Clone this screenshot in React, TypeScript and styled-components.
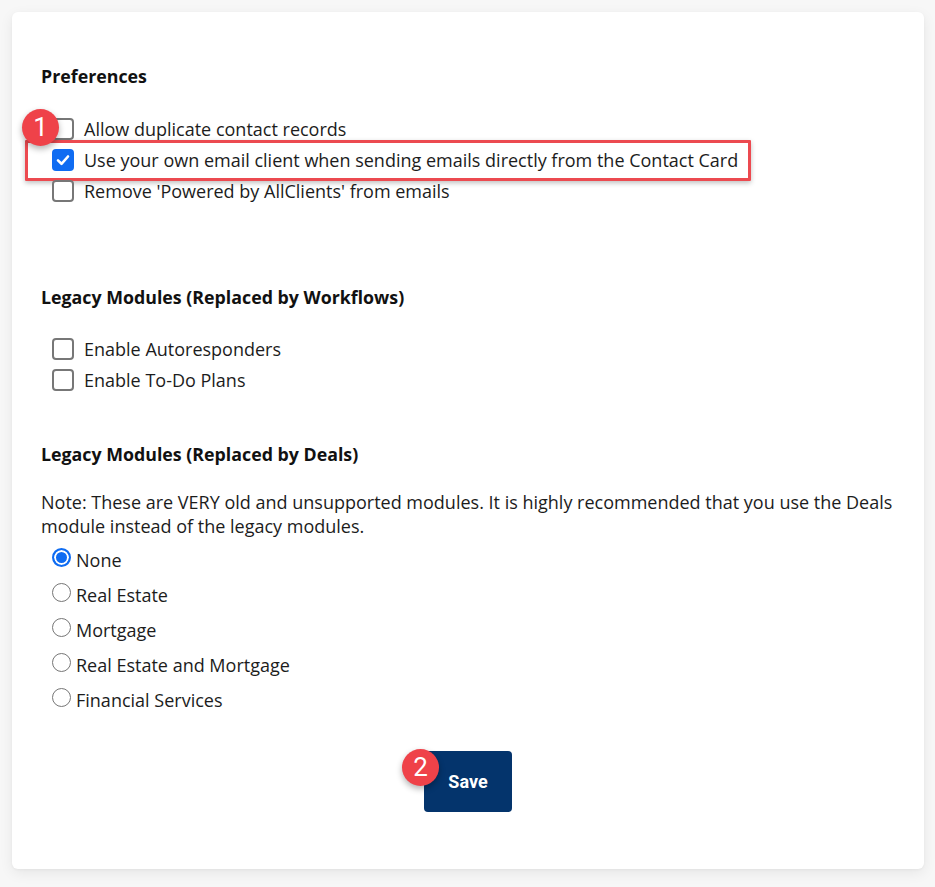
import React from 'react';
import styled, { createGlobalStyle } from 'styled-components';

const GlobalStyle = createGlobalStyle`
  html, body {
    margin: 0;
    padding: 0;
    background: #f7f7f7;
  }
  body {
    font-family: 'Open Sans', 'Liberation Sans', sans-serif;
    color: #1c1c1c;
  }
`;

const Page = styled.div`
  padding: 12px 11px 19px 12px;
`;

const Card = styled.div`
  background: #ffffff;
  border-radius: 6px;
  box-shadow: 0 4px 14px rgba(0, 0, 0, 0.07), 0 1px 3px rgba(0, 0, 0, 0.04);
  padding: 52px 29px 57px 29px;
  display: flex;
  flex-direction: column;
`;

const Heading = styled.h3<{ $top?: number }>`
  margin: ${(p) => p.$top ?? 0}px 0 0 0;
  font-size: 17.8px;
  font-weight: 700;
  line-height: 24px;
  color: #111;
`;

const OptionList = styled.div<{ $top: number }>`
  margin-top: ${(p) => p.$top}px;
  display: flex;
  flex-direction: column;
`;

const CheckRow = styled.label`
  position: relative;
  display: flex;
  align-items: center;
  height: 31px;
  padding-left: 11px;
  gap: 10px;
  font-size: 18px;
  cursor: pointer;
`;

const Box = styled.span<{ $checked?: boolean }>`
  width: 22px;
  height: 22px;
  box-sizing: border-box;
  border-radius: 4px;
  border: ${(p) => (p.$checked ? 'none' : '2px solid #777')};
  background: ${(p) => (p.$checked ? '#0f6cf2' : '#fff')};
  display: flex;
  align-items: center;
  justify-content: center;
  flex-shrink: 0;
`;

const Highlight = styled.div`
  position: absolute;
  left: -16px;
  top: -4px;
  width: 726px;
  height: 41px;
  box-sizing: border-box;
  border: 3px solid #ec4a50;
  border-radius: 1px;
  box-shadow: 0 2px 5px rgba(0, 0, 0, 0.25);
  pointer-events: none;
`;

const Badge = styled.div<{ $left: number; $top: number }>`
  position: absolute;
  left: ${(p) => p.$left}px;
  top: ${(p) => p.$top}px;
  width: 37px;
  height: 37px;
  border-radius: 50%;
  background: #ef4249;
  color: #fff;
  font-family: 'Roboto', 'Liberation Sans', sans-serif;
  font-weight: 400;
  font-size: 26px;
  line-height: 37px;
  text-align: center;
  box-shadow: 0 3px 6px rgba(0, 0, 0, 0.3);
  z-index: 2;
`;

const Note = styled.p`
  margin: 24px 0 0 0;
  font-size: 18px;
  line-height: 24px;
`;

const RadioRow = styled.label`
  display: flex;
  align-items: center;
  height: 35px;
  padding-left: 11px;
  gap: 5px;
  font-size: 18px;
  cursor: pointer;
`;

const RadioDot = styled.span<{ $checked?: boolean }>`
  width: 19px;
  height: 19px;
  box-sizing: border-box;
  border-radius: 50%;
  border: ${(p) => (p.$checked ? '2px solid #0f6cf2' : '1.5px solid #767676')};
  background: ${(p) => (p.$checked ? '#0f6cf2' : '#fff')};
  box-shadow: ${(p) => (p.$checked ? 'inset 0 0 0 2px #fff' : 'none')};
  flex-shrink: 0;
  position: relative;
  top: -2px;
`;

const Footer = styled.div`
  margin-top: 34px;
  display: flex;
  justify-content: center;
`;

const SaveButton = styled.button`
  position: relative;
  width: 88px;
  height: 61px;
  border: none;
  border-radius: 4px;
  background: #04346c;
  color: #fff;
  font-family: 'Roboto', 'Liberation Sans', sans-serif;
  font-weight: 700;
  font-size: 18px;
  cursor: pointer;
`;

const Check = () => (
  <svg width="16" height="16" viewBox="0 0 16 16">
    <path d="M3 8.4 L6.5 11.8 L13 4.5" fill="none" stroke="#fff" strokeWidth="2.6" strokeLinecap="round" strokeLinejoin="round" />
  </svg>
);

const Checkbox = ({ label, checked, children }: { label: string; checked?: boolean; children?: React.ReactNode }) => (
  <CheckRow>
    {children}
    <Box $checked={checked}>{checked && <Check />}</Box>
    {label}
  </CheckRow>
);

const radios = ['None', 'Real Estate', 'Mortgage', 'Real Estate and Mortgage', 'Financial Services'];

const App = () => {
  return (
    <Page>
      <GlobalStyle />
      <Card>
        <Heading>Preferences</Heading>
        <OptionList $top={25}>
          <Checkbox label="Allow duplicate contact records" />
          <Checkbox label="Use your own email client when sending emails directly from the Contact Card" checked>
            <Highlight />
            <Badge $left={-19} $top={-35}>1</Badge>
          </Checkbox>
          <Checkbox label="Remove 'Powered by AllClients' from emails" />
        </OptionList>

        <Heading $top={79}>Legacy Modules (Replaced by Workflows)</Heading>
        <OptionList $top={24}>
          <Checkbox label="Enable Autoresponders" />
          <Checkbox label="Enable To-Do Plans" />
        </OptionList>

        <Heading $top={47}>Legacy Modules (Replaced by Deals)</Heading>
        <Note>
          Note: These are VERY old and unsupported modules. It is highly recommended that you use the Deals module
          instead of the legacy modules.
        </Note>
        <OptionList $top={4}>
          {radios.map((r, i) => (
            <RadioRow key={r}>
              <RadioDot $checked={i === 0} />
              {r}
            </RadioRow>
          ))}
        </OptionList>

        <Footer>
          <SaveButton>
            <Badge $left={-22} $top={-2}>2</Badge>
            Save
          </SaveButton>
        </Footer>
      </Card>
    </Page>
  );
};

export default App;
